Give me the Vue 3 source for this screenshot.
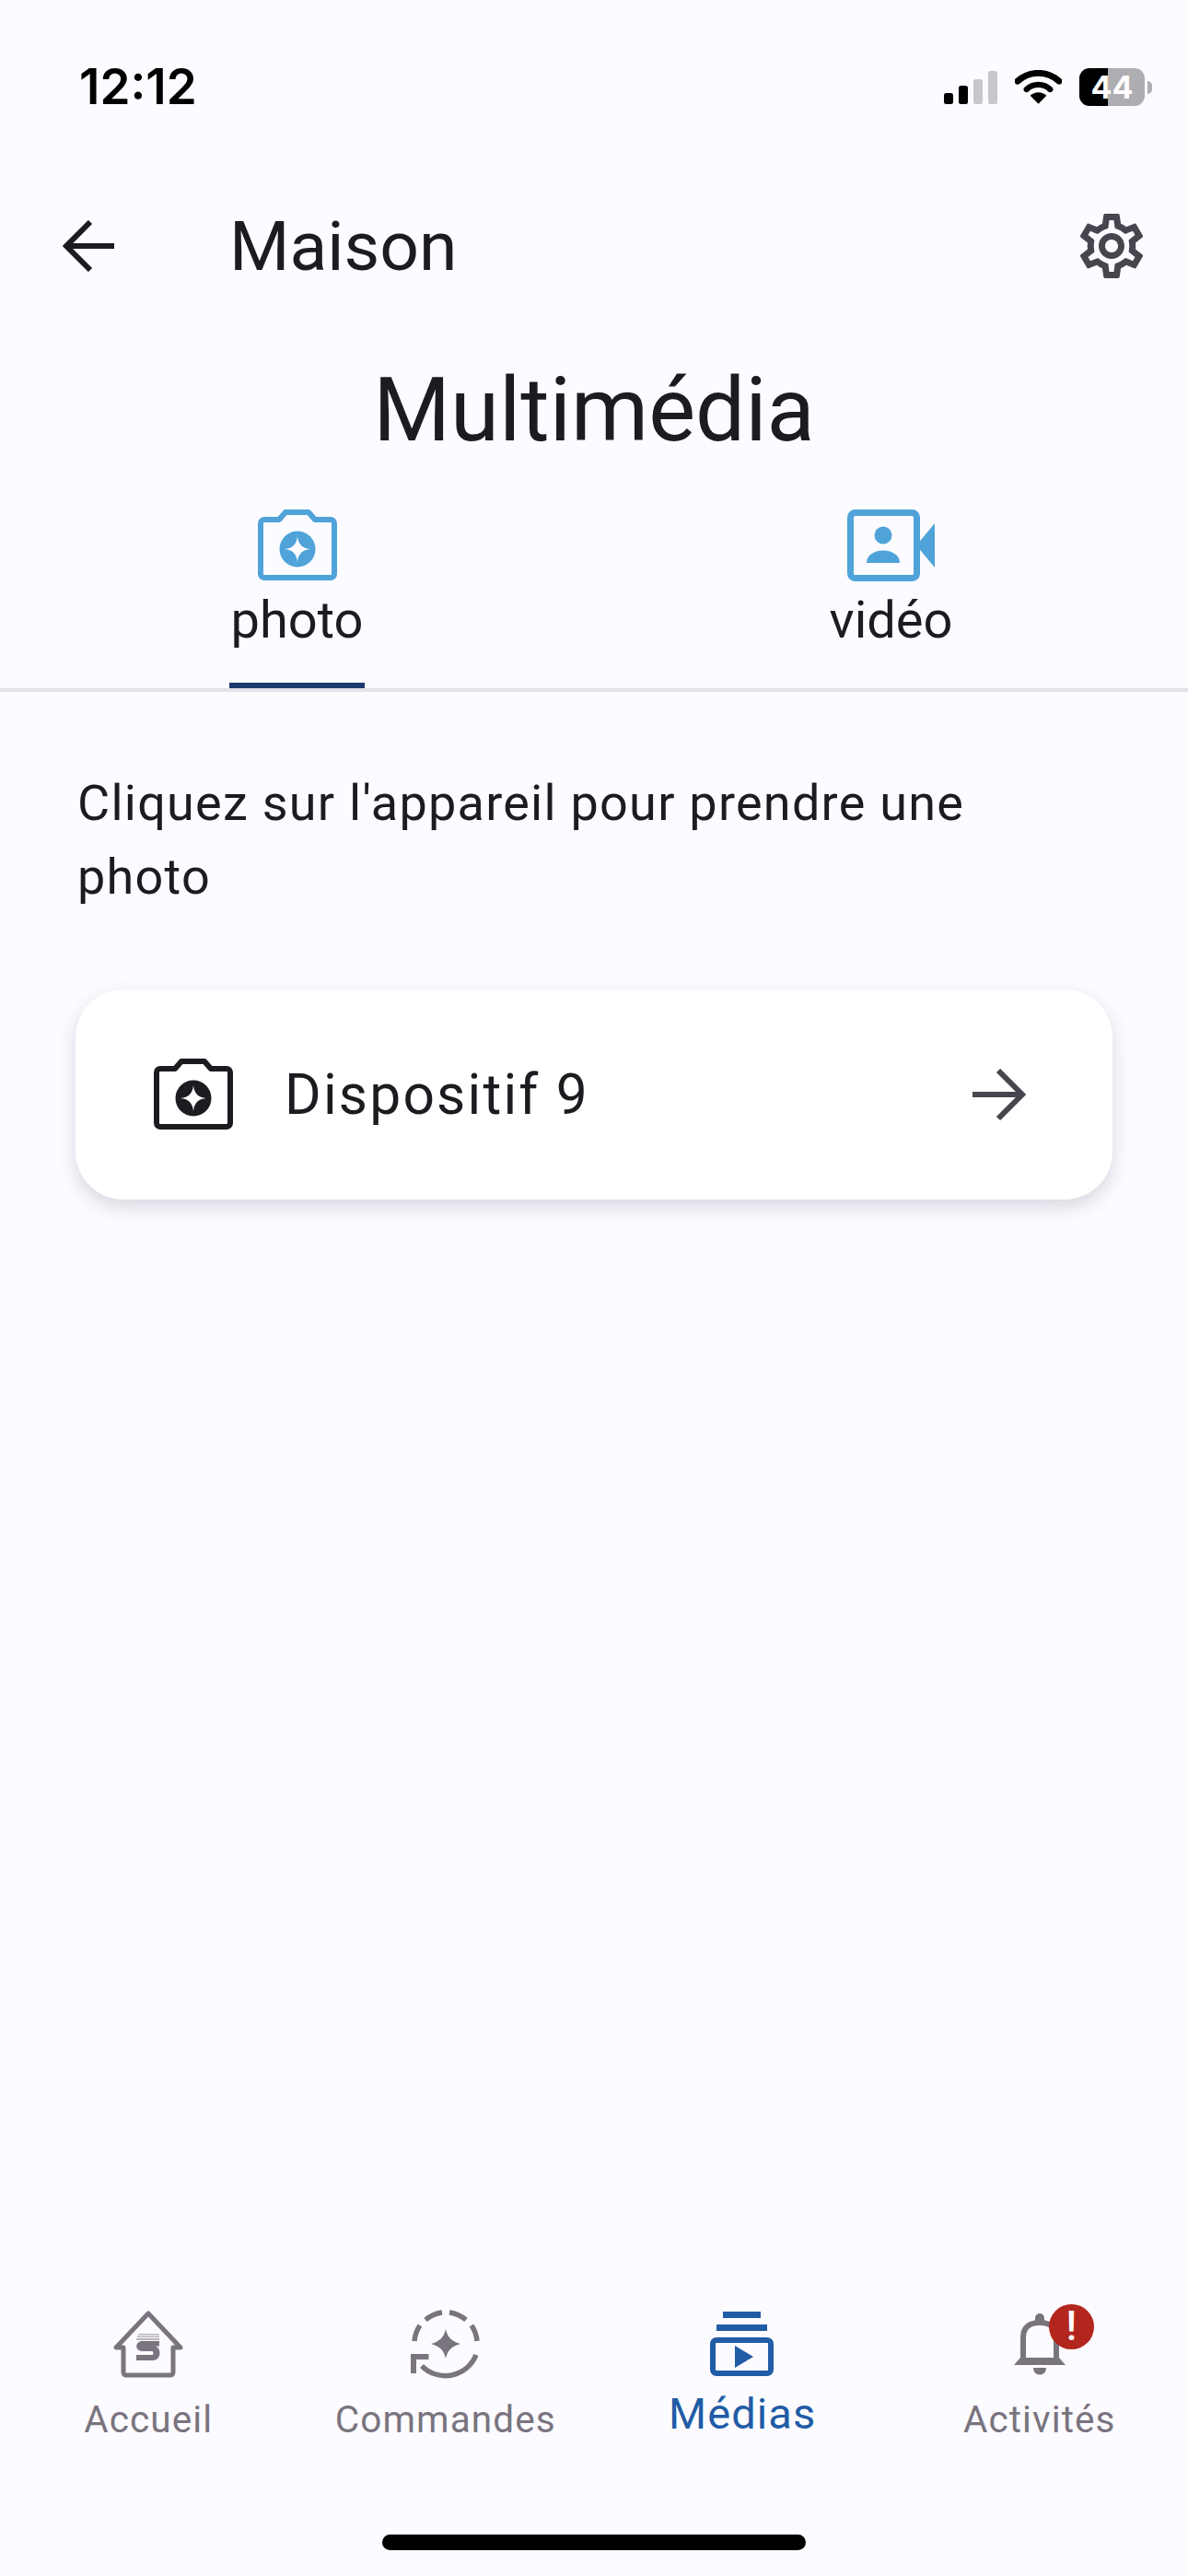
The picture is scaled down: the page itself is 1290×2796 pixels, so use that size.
<template>
  <div class="screen">
    <div class="status">
      <span class="time">12:12</span>
      <div class="status-icons">
        <svg width="58" height="36" viewBox="0 0 58 36">
          <rect x="0" y="24" width="10" height="12" rx="2.5" fill="#000" />
          <rect x="16" y="16" width="10" height="20" rx="2.5" fill="#000" />
          <rect x="32" y="9" width="10" height="27" rx="2.5" fill="#c6c6cb" />
          <rect x="48" y="0" width="10" height="36" rx="2.5" fill="#c6c6cb" />
        </svg>
        <svg width="51" height="38" viewBox="0 0 52 38">
          <path d="M3 12C16 0 36 0 49 12" fill="none" stroke="#000" stroke-width="7" stroke-linecap="round" />
          <path d="M13 21C20 14 32 14 39 21" fill="none" stroke="#000" stroke-width="6.5" stroke-linecap="round" />
          <path d="M26 37L17 28C22 23 30 23 35 28Z" fill="#000" />
        </svg>
        <div class="battery">
          <div class="battery-body"><span>44</span></div>
          <i class="battery-tip"></i>
        </div>
      </div>
    </div>

    <header class="topbar">
      <button class="icon-btn back" type="button" aria-label="Retour">
        <svg width="56" height="56" viewBox="0 0 56 56">
          <path d="M56 28H5M30 2L4 28l26 26" fill="none" stroke="#1c1b1f" stroke-width="6" />
        </svg>
      </button>
      <span class="topbar-title">Maison</span>
      <button class="icon-btn" type="button" aria-label="Réglages">
        <svg width="84" height="84" viewBox="0 0 24 24">
          <path d="M19.43 12.98c.04-.32.07-.64.07-.98s-.03-.66-.07-.98l2.11-1.65c.19-.15.24-.42.12-.64l-2-3.46c-.12-.22-.39-.3-.61-.22l-2.49 1c-.52-.4-1.08-.73-1.69-.98l-.38-2.65C14.46 2.18 14.25 2 14 2h-4c-.25 0-.46.18-.49.42l-.38 2.65c-.61.25-1.17.59-1.69.98l-2.49-1c-.23-.09-.49 0-.61.22l-2 3.46c-.13.22-.07.49.12.64l2.11 1.65c-.04.32-.07.65-.07.98s.03.66.07.98l-2.11 1.65c-.19.15-.24.42-.12.64l2 3.46c.12.22.39.3.61.22l2.49-1c.52.4 1.08.73 1.69.98l.38 2.65c.03.24.24.42.49.42h4c.25 0 .46-.18.49-.42l.38-2.65c.61-.25 1.17-.59 1.69-.98l2.49 1c.23.09.49 0 .61-.22l2-3.46c.12-.22.07-.49-.12-.64l-2.11-1.65zM17.45 11.27c.04.31.05.52.05.73s-.02.43-.05.73l-.14 1.13.89.7 1.08.84-.7 1.21-1.27-.51-1.04-.42-.9.68c-.43.32-.84.56-1.25.73l-1.06.43-.16 1.13-.2 1.35h-1.4l-.19-1.35-.16-1.13-1.06-.43c-.43-.18-.83-.41-1.23-.71l-.91-.7-1.06.43-1.27.51-.7-1.21 1.08-.84.89-.7-.14-1.13c-.03-.31-.05-.54-.05-.74s.02-.43.05-.73l.14-1.13-.89-.7-1.08-.84.7-1.21 1.27.51 1.04.42.9-.68c.43-.32.84-.56 1.25-.73l1.06-.43.16-1.13.2-1.35h1.39l.19 1.35.16 1.13 1.06.43c.43.18.83.41 1.23.71l.91.7 1.06-.43 1.27-.51.7 1.21-1.07.85-.89.7.14 1.13zM12 8c-2.21 0-4 1.79-4 4s1.79 4 4 4 4-1.79 4-4-1.79-4-4-4zm0 6c-1.1 0-2-.9-2-2s.9-2 2-2 2 .9 2 2-.9 2-2 2z" fill="#49454f" />
        </svg>
      </button>
    </header>

    <h1 class="page-title">Multimédia</h1>

    <nav class="tabs">
      <div v-for="tab in tabs" :key="tab.id" class="tab">
        <svg v-if="tab.id === 'photo'" width="88" height="78" viewBox="0 0 88 78">
          <path d="M8 11h16l7-8h25l7 8h17a4 4 0 0 1 4 4v55a4 4 0 0 1-4 4H8a4 4 0 0 1-4-4V15a4 4 0 0 1 4-4z" fill="none" stroke="#4fa3d9" stroke-width="6" stroke-linejoin="round" />
          <circle cx="44" cy="43" r="19.500" fill="#4fa3d9" />
          <path d="M44 29C45 38 49 42 58 43C49 44 45 48 44 57C43 48 39 44 30 43C39 42 43 38 44 29Z" fill="#fcfbff" />
        </svg>
        <svg v-else width="96" height="78" viewBox="0 0 96 78">
          <rect x="3.500" y="3.500" width="72" height="71" rx="5" fill="none" stroke="#4fa3d9" stroke-width="7" />
          <path d="M75 39L95 15V63Z" fill="#4fa3d9" />
          <circle cx="39" cy="28" r="9.500" fill="#4fa3d9" />
          <path d="M21 58C21 40 57 40 57 58Z" fill="#4fa3d9" />
        </svg>
        <span class="tab-label" :class="{ 'tab-label--on': tab.active }">{{ tab.label }}</span>
      </div>
    </nav>

    <main class="content">
      <p class="hint">Cliquez sur l'appareil pour prendre une photo</p>
      <div class="device-card">
        <svg width="88" height="78" viewBox="0 0 88 78">
          <path d="M8 11h16l7-8h25l7 8h17a4 4 0 0 1 4 4v55a4 4 0 0 1-4 4H8a4 4 0 0 1-4-4V15a4 4 0 0 1 4-4z" fill="none" stroke="#1c1b1f" stroke-width="6" stroke-linejoin="round" />
          <circle cx="44" cy="43" r="19.500" fill="#1c1b1f" />
          <path d="M44 29C45 38 49 42 58 43C49 44 45 48 44 57C43 48 39 44 30 43C39 42 43 38 44 29Z" fill="#fff" />
        </svg>
        <span class="device-name">Dispositif 9</span>
        <svg class="device-arrow" width="58" height="56" viewBox="0 0 58 56">
          <path d="M0 28H52M28 2l26 26-26 26" fill="none" stroke="#49454f" stroke-width="6" />
        </svg>
      </div>
    </main>

    <footer class="bottom-nav">
      <div class="nav-items">
        <div class="nav-item">
          <svg width="78" height="72" viewBox="0 0 78 72">
            <path d="M39 3L4 40h8v27a3 3 0 0 0 3 3h48a3 3 0 0 0 3-3V40h8Z" fill="none" stroke="#79747e" stroke-width="5" stroke-linejoin="round" />
            <g fill="#b9b7bd">
              <rect x="28" y="25" width="23" height="1.500" />
              <rect x="27" y="27.500" width="24" height="1.500" />
              <rect x="26" y="30" width="25" height="2" />
            </g>
            <path d="M51 33H33C24 33 24 44 33 44H43C45 44 45 48 43 48H26V54H44C54 54 54 38 44 38H34C32 38 32 38 34 38.500H51Z" fill="#79747e" />
          </svg>
          <span class="nav-label">Accueil</span>
        </div>
        <div class="nav-item">
          <svg width="78" height="78" viewBox="0 0 78 78">
            <g fill="none" stroke="#79747e" stroke-width="5.500">
              <path d="M17 13A36 36 0 0 1 35 5" />
              <path d="M43 5A36 36 0 0 1 61 13" />
              <path d="M5 36A36 36 0 0 1 11 19" />
              <path d="M73 36A36 36 0 0 0 67 19" />
              <path d="M72 51A36 36 0 0 1 13 63" />
            </g>
            <path d="M39 23C41 32 45 36 55 39C45 42 41 46 39 55C37 46 33 42 23 39C33 36 37 32 39 23Z" fill="#79747e" />
            <path d="M1 50H20.500V56H7V71H1Z" fill="#79747e" />
          </svg>
          <span class="nav-label">Commandes</span>
        </div>
        <div class="nav-item nav-item--active">
          <svg width="70" height="70" viewBox="0 0 70 70">
            <rect x="14" y="0" width="41" height="7" fill="#215ca6" />
            <rect x="7" y="14" width="55" height="7" fill="#215ca6" />
            <rect x="3" y="31" width="63" height="36" rx="4" fill="none" stroke="#215ca6" stroke-width="6" />
            <path d="M27 37L47 49L27 61Z" fill="#215ca6" />
          </svg>
          <span class="nav-label">Médias</span>
        </div>
        <div class="nav-item">
          <div class="bell">
            <svg width="58" height="68" viewBox="0 0 58 68">
              <path d="M11 52V27C11 16 18 11 29 11C40 11 47 16 47 27V52" fill="none" stroke="#79747e" stroke-width="6" />
              <path d="M24 12V6a5 5 0 0 1 10 0v6Z" fill="#79747e" />
              <path d="M1 57L8 49H50L57 57Z" fill="#79747e" />
              <path d="M22 60H36C36 70 22 70 22 60Z" fill="#79747e" />
            </svg>
            <span class="alert">!</span>
          </div>
          <span class="nav-label">Activités</span>
        </div>
      </div>
      <div class="home-bar"></div>
    </footer>
  </div>
</template>

<script setup>
const tabs = [
  { id: 'photo', label: 'photo', active: true },
  { id: 'video', label: 'vidéo', active: false },
];
</script>

<style>
html,
body {
  margin: 0;
  background: #fcfbff;
}
</style>

<style scoped>
.screen {
  width: 1290px;
  height: 2796px;
  display: flex;
  flex-direction: column;
  background: #fcfbff;
  color: #1c1b1f;
  font-family: Roboto, "Liberation Sans", sans-serif;
  overflow: hidden;
}

.status {
  height: 209px;
  flex-shrink: 0;
  box-sizing: border-box;
  padding: 66px 39px 0 86px;
  display: flex;
  justify-content: space-between;
  align-items: flex-start;
}

.time {
  font-family: Inter, "Liberation Sans", sans-serif;
  font-size: 53px;
  line-height: 56px;
  font-weight: 600;
  color: #000;
}

.status-icons {
  display: flex;
  align-items: center;
  gap: 19px;
  margin-top: 8px;
}

.battery {
  display: flex;
  align-items: center;
  gap: 3px;
}

.battery-body {
  width: 71px;
  height: 41px;
  border-radius: 11px;
  background: linear-gradient(90deg, #000 0 44%, #aeaeb2 44% 100%);
  color: #fff;
  display: grid;
  place-items: center;
}

.battery-body span {
  font-family: Inter, "Liberation Sans", sans-serif;
  font-size: 34px;
  line-height: 1;
  font-weight: 700;
}

.battery-tip {
  width: 5px;
  height: 14px;
  border-radius: 0 6px 6px 0;
  background: #aeaeb2;
}

.topbar {
  height: 116px;
  flex-shrink: 0;
  box-sizing: border-box;
  padding: 0 41px 0 68px;
  display: flex;
  align-items: center;
}

.icon-btn {
  padding: 0;
  border: 0;
  background: none;
  display: grid;
  place-items: center;
}

.back {
  margin-right: 125px;
}

.topbar-title {
  flex: 1;
  font-size: 75px;
  line-height: 116px;
}

.page-title {
  margin: 62px 0 0;
  text-align: center;
  font-size: 96px;
  line-height: 116px;
  font-weight: 400;
}

.tabs {
  display: grid;
  grid-template-columns: 1fr 1fr;
  height: 194px;
  flex-shrink: 0;
  border-bottom: 4px solid #e6e0e9;
  box-sizing: content-box;
  padding-top: 50px;
}

.tab {
  display: flex;
  flex-direction: column;
  align-items: center;
}

.tab-label {
  font-size: 56px;
  line-height: 76px;
  padding: 0 2px 30px;
  margin-top: 4px;
}

.tab-label--on {
  border-bottom: 6px solid #1d3a6e;
}

.content {
  flex: 1;
  padding: 0 82px;
}

.hint {
  margin: 81px 0 0;
  padding: 0 100px 0 2px;
  font-size: 54px;
  line-height: 80px;
  letter-spacing: 1.25px;
}

.device-card {
  margin-top: 82px;
  height: 228px;
  box-sizing: border-box;
  padding: 0 94px 0 84px;
  display: flex;
  align-items: center;
  background: #fff;
  border-radius: 52px;
  box-shadow: 0 8px 20px rgba(30, 30, 60, 0.16);
}

.device-name {
  flex: 1;
  margin-left: 55px;
  font-size: 60.5px;
  letter-spacing: 2.2px;
}

.bottom-nav {
  height: 318px;
  flex-shrink: 0;
  box-sizing: border-box;
  padding-top: 27px;
  display: flex;
  flex-direction: column;
  background: #fcfbff;
  box-shadow: 0 -1px 4px rgba(30, 30, 60, 0.02);
}

.nav-items {
  display: grid;
  grid-template-columns: repeat(4, 1fr);
}

.nav-item {
  height: 246px;
  display: flex;
  flex-direction: column;
  align-items: center;
  color: #79747e;
}

.nav-item > svg,
.bell {
  height: 78px;
  flex-shrink: 0;
}

.nav-label {
  margin-top: 18px;
  font-size: 40.5px;
  line-height: 50px;
  letter-spacing: 1.1px;
}

.nav-item--active {
  color: #215ca6;
}

.nav-item--active .nav-label {
  margin-top: 12px;
  font-size: 47px;
}

.bell {
  position: relative;
  display: flex;
  align-items: center;
}

.alert {
  position: absolute;
  top: -4px;
  left: 39px;
  width: 49px;
  height: 49px;
  border-radius: 50%;
  background: #b3261e;
  color: #fff;
  font-size: 44px;
  line-height: 49px;
  font-weight: 500;
  text-align: center;
}

.home-bar {
  width: 460px;
  height: 17px;
  margin: 0 auto;
  border-radius: 9px;
  background: #000;
}
</style>
